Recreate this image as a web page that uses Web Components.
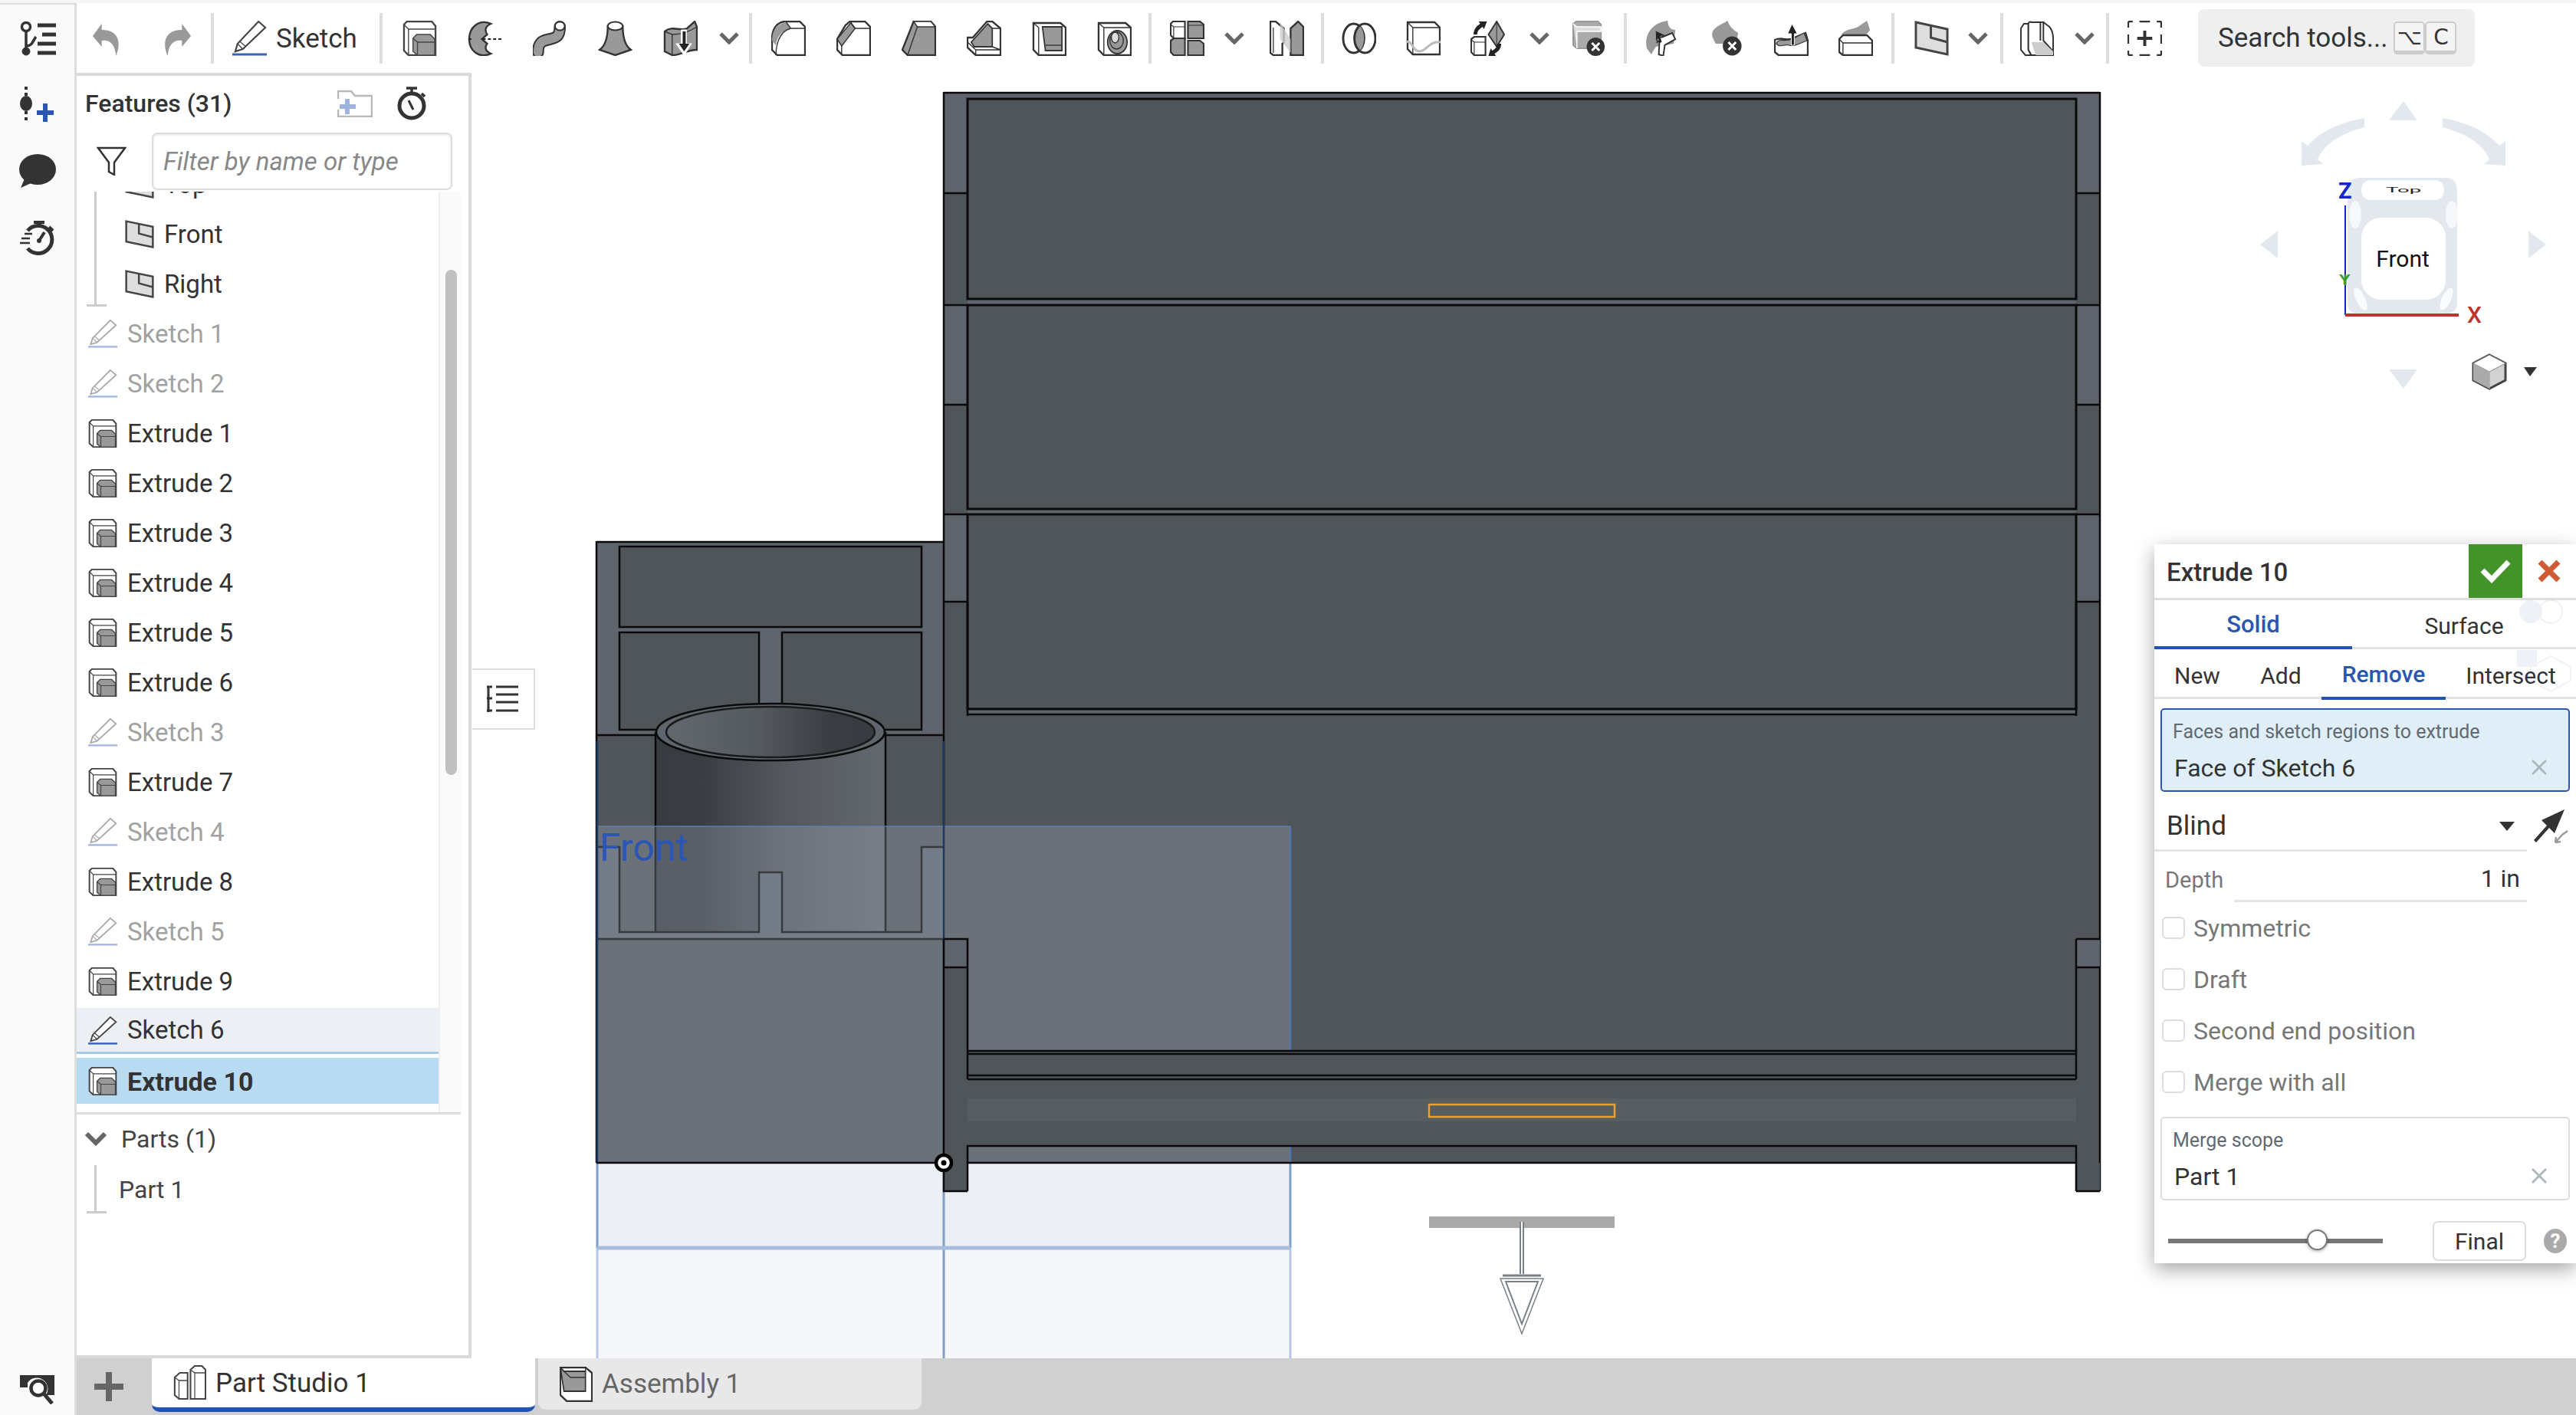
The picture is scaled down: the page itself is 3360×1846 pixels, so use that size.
<!DOCTYPE html>
<html>
<head>
<meta charset="utf-8">
<title>Part Studio 1</title>
<style>
  html, body { margin: 0; height: 100%; overflow: hidden; background: #fff; }
  body { font-family: Roboto, "Noto Sans", sans-serif; color: #333; }
</style>
</head>
<body>
<onshape-app>
  <side-rail slot="rail"></side-rail>
  <top-toolbar slot="toolbar">
    <tool-button icon="undo" w="82"></tool-button>
    <tool-button icon="redo" w="93"></tool-button>
    <tool-sep style="margin:0"></tool-sep>
    <sketch-button></sketch-button>
    <tool-sep style="margin:0 6px 0 0"></tool-sep>
    <tool-button icon="extrude"></tool-button>
    <tool-button icon="revolve"></tool-button>
    <tool-button icon="sweep"></tool-button>
    <tool-button icon="loft"></tool-button>
    <tool-button icon="thicken"></tool-button>
    <tool-chevron w="42"></tool-chevron>
    <tool-sep></tool-sep>
    <tool-button icon="fillet"></tool-button>
    <tool-button icon="chamfer"></tool-button>
    <tool-button icon="draft"></tool-button>
    <tool-button icon="rib"></tool-button>
    <tool-button icon="shell"></tool-button>
    <tool-button icon="hole"></tool-button>
    <tool-sep style="margin:0 4px 0 2px"></tool-sep>
    <tool-button icon="pattern"></tool-button>
    <tool-chevron w="38"></tool-chevron>
    <tool-button icon="mirror" style="margin-left:7px"></tool-button>
    <tool-sep style="margin:0 3px 0 2px"></tool-sep>
    <tool-button icon="boolean" w="84"></tool-button>
    <tool-button icon="split" w="84"></tool-button>
    <tool-button icon="transform" w="84"></tool-button>
    <tool-chevron w="43" style="margin-left:4px"></tool-chevron>
    <tool-button icon="deletepart" style="margin-left:2px"></tool-button>
    <tool-sep style="margin:0 4px 0 2px"></tool-sep>
    <tool-button icon="modify" w="84"></tool-button>
    <tool-button icon="deleteface" w="84"></tool-button>
    <tool-button icon="moveface" w="84"></tool-button>
    <tool-button icon="replaceface" w="84"></tool-button>
    <tool-sep style="margin:0 6px 0 5px"></tool-sep>
    <tool-button icon="plane" w="84"></tool-button>
    <tool-chevron w="37"></tool-chevron>
    <tool-sep style="margin:0 1px 0 11px"></tool-sep>
    <tool-button icon="connector" w="84"></tool-button>
    <tool-chevron w="36" style="margin-left:3px"></tool-chevron>
    <tool-sep style="margin:0 4px 0 10px"></tool-sep>
    <tool-button icon="plusbox" w="84"></tool-button>
    <tool-search style="margin-left:28px"></tool-search>
  </top-toolbar>
  <feature-panel slot="panel">
    <tree-group slot="features">
      <feature-row icon="plane" inset="37">Top</feature-row>
      <feature-row icon="plane" inset="37">Front</feature-row>
      <feature-row icon="plane" inset="37">Right</feature-row>
    </tree-group>
    <feature-row slot="features" icon="sketch" dim>Sketch 1</feature-row>
    <feature-row slot="features" icon="sketch" dim>Sketch 2</feature-row>
    <feature-row slot="features" icon="extrude">Extrude 1</feature-row>
    <feature-row slot="features" icon="extrude">Extrude 2</feature-row>
    <feature-row slot="features" icon="extrude">Extrude 3</feature-row>
    <feature-row slot="features" icon="extrude">Extrude 4</feature-row>
    <feature-row slot="features" icon="extrude">Extrude 5</feature-row>
    <feature-row slot="features" icon="extrude">Extrude 6</feature-row>
    <feature-row slot="features" icon="sketch" dim>Sketch 3</feature-row>
    <feature-row slot="features" icon="extrude">Extrude 7</feature-row>
    <feature-row slot="features" icon="sketch" dim>Sketch 4</feature-row>
    <feature-row slot="features" icon="extrude">Extrude 8</feature-row>
    <feature-row slot="features" icon="sketch" dim>Sketch 5</feature-row>
    <feature-row slot="features" icon="extrude">Extrude 9</feature-row>
    <feature-row slot="features" icon="sketch" hover>Sketch 6</feature-row>
    <feature-row slot="features" icon="extrude" selected>Extrude 10</feature-row>
  </feature-panel>
  <model-view slot="view">
    <view-cube></view-cube>
    <tree-toggle></tree-toggle>
    <extrude-dialog></extrude-dialog>
  </model-view>
  <tab-bar slot="tabs">
    <doc-tab icon="studio" active>Part Studio 1</doc-tab>
    <doc-tab icon="assembly">Assembly 1</doc-tab>
  </tab-bar>
</onshape-app>

<script>
// toolbar + feature tree icons, all drawn on a 46x46 box
const ICONS = {
  undo: `<path d="M14 4 L2 20 L14 34 V26 C24 24 32 30 33 46 C40 30 38 12 14 12Z" fill="#999"/>`,
  redo: `<path d="M32 4 L44 20 L32 34 V26 C22 24 14 30 13 46 C6 30 8 12 32 12Z" fill="#999"/>`,
  extrude: `<path d="M2 5 L6 1 H39 L44 7 V45 H8 L2 39Z" fill="#fff" stroke="#444" stroke-width="2.4"/>
    <path d="M2 5 L8 11 H44 M8 11 V45" fill="none" stroke="#444" stroke-width="1.4"/>
    <path d="M14 23 L19 18 H37 L43 24 V45 H20 L14 40Z" fill="#999" stroke="#444" stroke-width="1.6"/>
    <path d="M14 23 L20 28 H43 M20 28V45" fill="none" stroke="#444" stroke-width="1.4"/>`,
  revolve: `<path d="M31 4 C15 -3 2 9 2 24 C2 39 15 50 31 43 C24 40 22 35 26 30 L19 24 L26 18 C22 12 24 7 31 4Z" fill="#999" stroke="#333" stroke-width="2.4"/>
    <path d="M1 24 H8 M20 24 H45" stroke="#222" stroke-width="2" stroke-dasharray="4 3"/>`,
  sweep: `<path d="M7 41 C7 26 15 26 23 24 C32 22 36 20 36 8" fill="none" stroke="#333" stroke-width="16" stroke-linecap="round"/>
    <path d="M7 41 C7 26 15 26 23 24 C32 22 36 20 36 8" fill="none" stroke="#999" stroke-width="12" stroke-linecap="round"/>
    <ellipse cx="36" cy="7" rx="6.5" ry="5.5" fill="#fff" stroke="#333" stroke-width="2"/>`,
  loft: `<path d="M13 7 C13 25 8 34 2 38 L23 45 L44 38 C38 34 33 25 33 7Z" fill="#999" stroke="#333" stroke-width="2.4"/>
    <ellipse cx="23" cy="7" rx="10" ry="5.5" fill="#fff" stroke="#333" stroke-width="2"/>`,
  thicken: `<path d="M2 14 C12 6 22 14 32 10 L42 1 L45 8 V38 C32 38 20 46 12 45 L2 40Z" fill="#999" stroke="#333" stroke-width="2.4"/>
    <path d="M12 45 V18 M2 14 L12 18 C22 18 32 16 45 8" fill="none" stroke="#333" stroke-width="1.4"/>
    <path d="M24 12 V30 H17 L28 45 L38 30 H31 V12Z" fill="#fff" stroke="#fff" stroke-width="1"/>
    <path d="M26 14 V30 H21 L28 40 L35 30 H30 V14Z" fill="#222"/>`,
  fillet: `<path d="M1 24 C1 10 8 2 18 1 H38 L45 8 V45 H8 L1 38Z" fill="#fff" stroke="#333" stroke-width="2.4"/>
    <path d="M1 26 C1 12 8 4 20 2 L26 10 C14 13 8 20 6 32Z" fill="#999"/>
    <path d="M26 10 H45 M26 10 L20 2 M26 10 C14 13 7 24 6 45" fill="none" stroke="#333" stroke-width="1.4"/>`,
  chamfer: `<path d="M1 24 L12 6 L18 1 H38 L45 8 V45 H8 L1 38Z" fill="#fff" stroke="#333" stroke-width="2.4"/>
    <path d="M1 24 L19 3 L25 10 L7 33Z" fill="#999" stroke="#333" stroke-width="1.4"/>
    <path d="M25 10 H45 M25 10 L19 2 M7 33 V45" fill="none" stroke="#333" stroke-width="1.4"/>`,
  draft: `<path d="M16 1 H39 L45 8 V45 H8 L1 38Z" fill="#999" stroke="#333" stroke-width="2.4"/>
    <path d="M16 1 H39 L45 8 H21Z" fill="#fff" stroke="#333" stroke-width="1.4"/>
    <path d="M21 8 L8 45" stroke="#333" stroke-width="1.4"/>`,
  rib: `<path d="M27 1 H34 L45 10 V45 H12 L1 35 V22 L8 22 Z" fill="#fff" stroke="#333" stroke-width="2.4"/>
    <path d="M28 4 L34 10 V34 H10 L6 28Z" fill="#999" stroke="#333" stroke-width="1.8"/>
    <path d="M34 10 H45 M34 34 L45 38 M1 28 L12 38 V45 M12 38 H45" fill="none" stroke="#333" stroke-width="1.4"/>`,
  shell: `<path d="M2 3 H38 L45 9 V45 H9 L2 38Z" fill="#fff" stroke="#333" stroke-width="2.4"/>
    <path d="M2 3 L9 9 V45" fill="none" stroke="#333" stroke-width="1.4"/>
    <path d="M14 8 H40 V39 H18Z" fill="#999" stroke="#333" stroke-width="1.8"/>
    <path d="M18 32 H40" stroke="#333" stroke-width="1.4"/>`,
  hole: `<path d="M2 3 H38 L45 9 V45 H9 L2 38Z" fill="#fff" stroke="#333" stroke-width="2.4"/>
    <path d="M2 3 L9 9 V45 M9 9 H45" fill="none" stroke="#333" stroke-width="1.4"/>
    <ellipse cx="27" cy="28" rx="13" ry="15" fill="#999" stroke="#333" stroke-width="1.8"/>
    <ellipse cx="26" cy="26" rx="9" ry="11" fill="#999" stroke="#333" stroke-width="1.4"/>
    <ellipse cx="24" cy="22" rx="5" ry="7" fill="#ddd" stroke="#333" stroke-width="1.4"/>`,
  pattern: `<path d="M1 4 L4 1 H20 V23 H5 L1 19Z" fill="#fff" stroke="#333" stroke-width="2.2"/>
    <path d="M24 1 H40 L45 5 V23 H24Z" fill="#999" stroke="#333" stroke-width="2.2"/>
    <path d="M1 26 L5 23 H20 V45 H5 L1 41Z" fill="#999" stroke="#333" stroke-width="2.2"/>
    <path d="M24 26 H40 L45 30 V45 H24Z" fill="#999" stroke="#333" stroke-width="2.2"/>
    <path d="M1 5 L5 8 H20 M5 8 V23 M24 6 H45" fill="none" stroke="#333" stroke-width="1.2"/>`,
  mirror: `<path d="M1 1 H8 L19 10 V28 L17 30 V45 H5 L1 42Z" fill="#fff" stroke="#333" stroke-width="2.4"/>
    <path d="M28 30 V10 L38 1 L45 8 V45 H28Z" fill="#999" stroke="#333" stroke-width="2.4"/>
    <path d="M14 2 L28 24 V42 L14 24Z" fill="#ccc" opacity=".8"/>
    <path d="M5 9 V42" stroke="#333" stroke-width="1.3"/>`,
  boolean: `<ellipse cx="16" cy="23" rx="14" ry="19" fill="#fff" stroke="#333" stroke-width="3"/>
    <path d="M23 6 C32 12 32 34 23 40 C14 34 14 12 23 6Z" fill="#999"/>
    <ellipse cx="31" cy="23" rx="14" ry="19" fill="none" stroke="#333" stroke-width="3"/>`,
  split: `<path d="M2 2 H38 L45 9 V44 H9 L2 37Z" fill="#fff" stroke="#333" stroke-width="2.4"/>
    <path d="M2 2 L9 9 V44 M9 9 H45" fill="none" stroke="#333" stroke-width="1.4"/>
    <path d="M0 28 C8 24 8 40 18 40 C28 40 30 26 46 28" fill="none" stroke="#bbb" stroke-width="3"/>`,
  transform: `<path d="M1 24 L5 21 H20 V45 H5 L1 41Z" fill="#fff" stroke="#333" stroke-width="2.2"/>
    <path d="M1 25 L5 28 H20 M5 28 V45" fill="none" stroke="#333" stroke-width="1.2"/>
    <path d="M35 1 L45 18 L35 34 L24 18Z" fill="#999" stroke="#333" stroke-width="2"/>
    <path d="M35 1 V34" stroke="#333" stroke-width="1"/>
    <path d="M4 18 C5 10 8 7 13 4 L11 1 H22 L18 11 L16 8 C12 11 9 13 9 18Z" fill="#222"/>
    <path d="M41 30 C41 37 36 41 32 43 L34 46 H24 L27 36 L29 39 C33 37 36 34 36 30Z" fill="#222"/>`,
  deletepart: `<path d="M1 4 L5 1 H34 L38 5 V36 H6 L1 32Z" fill="#aaa" stroke="#999" stroke-width="2"/>
    <path d="M1 4 L6 8 H38 V14 H6 V36" fill="#ddd" stroke="#fff" stroke-width="1.5"/>
    <circle cx="31" cy="34" r="12" fill="#333"/>
    <path d="M26 29 L36 39 M36 29 L26 39" stroke="#fff" stroke-width="3"/>`,
  modify: `<path d="M2 36 C-2 18 10 2 30 0 C30 8 34 12 40 12 L38 30 L14 34 L8 44Z" fill="#999"/>
    <path d="M15 15 L24 19 L21 22 L36 16 L40 24 L26 32 L24 46 L18 44 L19 26 L16 28Z" fill="#fff" stroke="#333" stroke-width="2"/>
    <path d="M15 15 L23 18 L20 21 L22 28 L19 29 L17 23 L14 25Z" fill="#222"/>`,
  deleteface: `<path d="M4 22 C0 10 14 6 24 0 C26 8 32 12 38 16 L36 26 L20 30 L8 30Z" fill="#999"/>
    <circle cx="30" cy="33" r="12.5" fill="#333"/>
    <path d="M25 28 L35 38 M35 28 L25 38" stroke="#fff" stroke-width="3"/>`,
  moveface: `<path d="M1 25 C10 21 14 26 22 24 L42 16 L45 26 V45 H6 L1 41Z" fill="#fff" stroke="#333" stroke-width="2.4"/>
    <path d="M3 30 C5 22 14 28 24 24 L40 16 L44 26 C32 30 28 34 20 32 C12 30 8 36 3 30Z" fill="#999" stroke="#333" stroke-width="1.2"/>
    <path d="M24 4 L31 17 H27 V32 H23 V17 H18Z" fill="#222" stroke="#fff" stroke-width="1"/>`,
  replaceface: `<path d="M4 18 C10 10 18 12 26 8 L38 0 L42 12 C38 20 22 26 12 22Z" fill="#999"/>
    <path d="M1 24 L6 19 H38 L45 26 V45 H6 L1 41Z" fill="#fff" stroke="#333" stroke-width="2.4"/>
    <path d="M1 24 L6 29 H45 M6 29 V45" fill="none" stroke="#333" stroke-width="1.4"/>`,
  plane: `<path d="M2 2 L44 11 V44 L2 35Z" fill="#ddd" stroke="#444" stroke-width="3"/>
    <path d="M22 5 V22 L44 28" fill="none" stroke="#444" stroke-width="3"/>`,
  connector: `<path d="M2 10 L6 4 L12 4 V38 L16 45 L8 45 L2 38Z" fill="#fff" stroke="#333" stroke-width="2"/>
    <path d="M12 4 C12 2 14 1 16 2 H32 V26 L45 40 V45 H16 L12 38Z" fill="#fff" stroke="#333" stroke-width="2"/>
    <path d="M28 2 V26 M32 2 L40 8 C44 12 45 18 45 24 V40" fill="none" stroke="#333" stroke-width="2"/>
    <path d="M16 28 H32 L45 40 V45 H22Z" fill="#ccc"/>`,
  plusbox: `<path d="M1 9 V3 Q1 1 3 1 H7 M16 1 H30 M39 1 H43 Q45 1 45 3 V9 M45 18 V30 M45 39 V43 Q45 45 43 45 H39 M30 45 H16 M7 45 H3 Q1 45 1 43 V39 M1 30 V18" fill="none" stroke="#333" stroke-width="2.4"/>
    <path d="M23 13 V33 M13 23 H33" stroke="#333" stroke-width="4"/>`,
  sketch: `<path d="M35 1 L44 9 L14 37 L4 40 L7 30Z" fill="#fff" stroke="#444" stroke-width="2.2"/>
    <path d="M7 30 L14 37 M10 27 L17 33" fill="none" stroke="#444" stroke-width="1.4"/>
    <rect x="0" y="42.5" width="46" height="3" fill="#3a62b8"/>`,
  studio: `<path d="M2 16 L9 10 H20 V44 H8 L2 39Z" fill="#fff" stroke="#444" stroke-width="2.2"/>
    <path d="M24 6 L30 1 H40 L45 6 V44 H24Z" fill="#fff" stroke="#444" stroke-width="2.2"/>
    <path d="M2 16 L8 20 H20 M8 20 V44 M24 6 L30 10 H45 M30 10 V44" fill="none" stroke="#444" stroke-width="1.3"/>`,
  assembly: `<path d="M1 1 H36 L45 8 V45 H10 L1 37Z" fill="#fff" stroke="#333" stroke-width="2.4"/>
    <path d="M1 1 L6 6 H36 V32 H6Z" fill="#999" stroke="#333" stroke-width="1.8"/>
    <path d="M36 1 V6 M6 6 L15 14 H36" fill="none" stroke="#333" stroke-width="1.4"/>`
};

function icon(name, w = 45, h = 46) {
  return `<svg viewBox="0 0 46 46" width="${w}" height="${h}" preserveAspectRatio="none" style="display:block;flex:none">${ICONS[name] || ""}</svg>`;
}

class OnshapeApp extends HTMLElement {
  constructor() {
    super();
    this.attachShadow({ mode: "open" });
    this.shadowRoot.innerHTML = `
      <style>
        :host {
          display: grid;
          width: 100vw;
          height: 100vh;
          grid-template-columns: 100px 515px 1fr;
          grid-template-rows: 4px 91px 1fr 74px;
          grid-template-areas:
            "strip strip strip"
            "rail tools tools"
            "rail panel view"
            "rail tabs tabs";
          font-family: Roboto, "Noto Sans", sans-serif;
          color: #333;
        }
        .strip { grid-area: strip; background: #f6f6f6; }
        ::slotted([slot=rail]) { grid-area: rail; }
        ::slotted([slot=toolbar]) { grid-area: tools; }
        ::slotted([slot=panel]) { grid-area: panel; }
        ::slotted([slot=view]) { grid-area: view; }
        ::slotted([slot=tabs]) { grid-area: tabs; }
      </style>
      <div class="strip"></div>
      <slot name="rail"></slot>
      <slot name="toolbar"></slot>
      <slot name="panel"></slot>
      <slot name="view"></slot>
      <slot name="tabs"></slot>`;
  }
}

class SideRail extends HTMLElement {
  constructor() {
    super();
    this.attachShadow({ mode: "open" });
    this.shadowRoot.innerHTML = `
      <style>
        :host {
          display: flex;
          flex-direction: column;
          align-items: center;
          box-sizing: border-box;
          background: #fafafa;
          border-top: 2px solid #ddd;
          border-right: 3px solid #ddd;
          padding: 22px 0 14px;
        }
        svg { display: block; }
        .foot { margin-top: auto; }
      </style>
      <!-- feature list toggle -->
      <svg width="48" height="46" viewBox="0 0 48 46" fill="none" stroke="#333">
        <circle cx="9" cy="7" r="5.5" stroke-width="3.5"/>
        <path d="M9 13 V38 M9 32 C18 32 18 24 22 20" stroke-width="3.5"/>
        <circle cx="9" cy="39" r="5" fill="#333"/>
        <path d="M24 5 H48 M30 17 H48 M24 29 H48 M24 41 H48" stroke-width="5"/>
      </svg>
      <!-- insert feature -->
      <svg width="46" height="46" viewBox="0 0 46 46" style="margin-top:39px">
        <path d="M8 0 V14 M8 32 V46" stroke="#333" stroke-width="4" stroke-dasharray="4 4"/>
        <ellipse cx="8" cy="22" rx="8" ry="10" fill="#333"/>
        <path d="M33 22 V46 M22 34 H44" stroke="#2a56b0" stroke-width="6"/>
      </svg>
      <!-- comments -->
      <svg width="48" height="44" viewBox="0 0 48 44" style="margin-top:42px">
        <ellipse cx="24" cy="20" rx="24" ry="20" fill="#333"/>
        <path d="M8 30 L2 44 L20 36Z" fill="#333"/>
      </svg>
      <!-- performance -->
      <svg width="46" height="46" viewBox="0 0 46 46" style="margin-top:43px">
        <path d="M18 2 H32 M25 2 V8 M38 8 L43 13" stroke="#333" stroke-width="4" fill="none"/>
        <path d="M10 13 A18 18 0 1 1 10 36" fill="none" stroke="#333" stroke-width="5"/>
        <path d="M25 26 L32 15" stroke="#333" stroke-width="4"/>
        <circle cx="25" cy="26" r="3" fill="#333"/>
        <path d="M6 17 H16 M2 23 H13 M0 29 H13" stroke="#333" stroke-width="2.5"/>
      </svg>
      <!-- find -->
      <svg class="foot" width="45" height="38" viewBox="0 0 45 38">
        <path d="M0 0 H45 V26 H34 A14 14 0 0 0 10 10 V16 H0Z" fill="#333"/>
        <circle cx="24" cy="17" r="9.5" fill="#fff" stroke="#333" stroke-width="4.5"/>
        <path d="M31 24 L42 37" stroke="#333" stroke-width="5"/>
      </svg>`;
  }
}

class TopToolbar extends HTMLElement {
  constructor() {
    super();
    this.attachShadow({ mode: "open" });
    this.shadowRoot.innerHTML = `
      <style>
        :host { display: flex; align-items: center; background: #fff; min-width: 0; }
      </style>
      <slot></slot>`;
  }
}

class ToolButton extends HTMLElement {
  constructor() {
    super();
    this.attachShadow({ mode: "open" });
  }
  connectedCallback() {
    const w = this.getAttribute("w") || 85;
    this.shadowRoot.innerHTML = `
      <style>
        :host { display: flex; flex: none; justify-content: center; align-items: center; width: ${w}px; height: 46px; }
      </style>
      ${icon(this.getAttribute("icon"))}`;
  }
}

class ToolSep extends HTMLElement {
  constructor() {
    super();
    this.attachShadow({ mode: "open" });
    this.shadowRoot.innerHTML = `<style>:host { display: block; flex: none; width: 4px; height: 66px; background: #ddd; margin: 0 5px; }</style>`;
  }
}

class ToolChevron extends HTMLElement {
  constructor() {
    super();
    this.attachShadow({ mode: "open" });
  }
  connectedCallback() {
    const w = this.getAttribute("w") || 38;
    this.shadowRoot.innerHTML = `
      <style>:host { display: flex; flex: none; justify-content: center; width: ${w}px; }</style>
      <svg width="26" height="16" viewBox="0 0 26 16"><path d="M2 2 L13 13 L24 2" fill="none" stroke="#666" stroke-width="5"/></svg>`;
  }
}

class SketchButton extends HTMLElement {
  constructor() {
    super();
    this.attachShadow({ mode: "open" });
    this.shadowRoot.innerHTML = `
      <style>
        :host { display: flex; flex: none; align-items: center; box-sizing: border-box; width: 216px; padding-left: 24px; gap: 12px; font-size: 35px; }
        span { padding-top: 1px; }
      </style>
      ${icon("sketch", 45, 46)}<span>Sketch</span>`;
  }
}

class ToolSearch extends HTMLElement {
  constructor() {
    super();
    this.attachShadow({ mode: "open" });
    this.shadowRoot.innerHTML = `
      <style>
        :host {
          display: flex; flex: none; align-items: center; box-sizing: border-box;
          width: 361px; height: 75px; padding: 0 26px; background: #efefef; border-radius: 8px;
          font-size: 35px;
        }
        kbd {
          display: flex; align-items: center; justify-content: center; box-sizing: border-box; flex: none;
          width: 41px; height: 43px; background: #f4f4f4; border: 2px solid #ccc; border-bottom-width: 5px;
          border-radius: 5px; font: 28px "DejaVu Sans", sans-serif; color: #333;
        }
        span { margin-right: 8px; white-space: nowrap; }
      </style>
      <span>Search tools...</span><kbd>⌥</kbd><kbd>C</kbd>`;
  }
}

class FeaturePanel extends HTMLElement {
  constructor() {
    super();
    this.attachShadow({ mode: "open" });
    this.shadowRoot.innerHTML = `
      <style>
        :host {
          display: flex; flex-direction: column; box-sizing: border-box; min-height: 0;
          background: #fff; border: 4px solid #d9d9d9; border-left: 0; border-bottom-width: 4px; overflow: hidden;
        }
        header { display: flex; align-items: center; height: 71px; flex: none; padding-left: 11px; }
        h2 { margin: 0; font-size: 32px; font-weight: 500; width: 329px; white-space: nowrap; }
        .filter { display: flex; align-items: center; flex: none; height: 80px; padding-left: 26px; gap: 33px; }
        .input {
          box-sizing: border-box; width: 392px; height: 75px; border: 2px solid #ddd; border-radius: 7px;
          display: flex; align-items: center; padding: 2px 0 0 13px; font-style: italic; font-size: 33px; line-height: 26px; color: #888;
          box-shadow: inset 0 1px 3px rgba(0,0,0,.12); position: relative; background: #fff;
        }
        .tree { display: flex; flex: none; height: 1201px; width: 501px; border-bottom: 3px solid #ddd; box-sizing: content-box; }
        .list { width: 472px; flex: none; overflow: hidden; }
        .inner { margin-top: -40px; }
        .track { flex: 1; background: #fafafa; border-left: 2px solid #eee; padding: 102px 0 0 7px; }
        .thumb { width: 15px; height: 659px; background: #c0c0c0; border-radius: 8px; }
        .parts { display: flex; align-items: center; height: 64px; flex: none; padding-left: 10px; font-size: 32px; color: #444; }
        .parts span { margin-left: 18px; }
        .part { margin: 2px 0 0 23px; width: 200px; height: 63px; border-left: 3px solid #ccc; position: relative; display: flex; align-items: center; padding-left: 29px; font-size: 32px; color: #444; }
        .part::after { content: ""; position: absolute; left: -13px; bottom: 0; width: 26px; height: 3px; background: #ccc; }
      </style>
      <header>
        <h2>Features (31)</h2>
        <svg width="46" height="36" viewBox="0 0 46 36" fill="none">
          <path d="M1 12 V2 H18 L23 8 H45 V35 H1 V26" stroke="#b8b8b8" stroke-width="2.5"/>
          <path d="M13 12 V32 M3 22 H24" stroke="#9fb4dc" stroke-width="6"/>
        </svg>
        <svg width="38" height="44" viewBox="0 0 38 44" style="margin-left:32px">
          <path d="M12 2 H26 M19 2 V8 M32 9 L36 13" stroke="#333" stroke-width="3.5" fill="none"/>
          <circle cx="19" cy="25" r="16" fill="none" stroke="#333" stroke-width="5"/>
          <path d="M15 18 L21 30" stroke="#333" stroke-width="3"/>
        </svg>
      </header>
      <div class="filter">
        <svg width="39" height="38" viewBox="0 0 39 38" fill="none" stroke="#333" stroke-width="2.5"><path d="M2 2 H37 L23 21 V37 L16 33 V21Z"/></svg>
        <div class="input">Filter by name or type</div>
      </div>
      <div class="tree">
        <div class="list"><div class="inner"><slot name="features"></slot></div></div>
        <div class="track"><div class="thumb"></div></div>
      </div>
      <div class="parts">
        <svg width="30" height="20" viewBox="0 0 30 20"><path d="M3 3 L15 15 L27 3" fill="none" stroke="#666" stroke-width="6"/></svg>
        <span>Parts (1)</span>
      </div>
      <div class="part">Part 1</div>`;
  }
}

class TreeGroup extends HTMLElement {
  constructor() {
    super();
    this.attachShadow({ mode: "open" });
    this.shadowRoot.innerHTML = `
      <style>
        :host { display: block; position: relative; margin: 0 0 5px 23px; border-left: 3px solid #ccc; height: 190px; }
        :host::after { content: ""; position: absolute; left: -13px; bottom: 0; width: 26px; height: 3px; background: #ccc; }
      </style>
      <slot></slot>`;
  }
}

class FeatureRow extends HTMLElement {
  constructor() {
    super();
    this.attachShadow({ mode: "open" });
  }
  connectedCallback() {
    const inset = this.getAttribute("inset") || 15;
    this.shadowRoot.innerHTML = `
      <style>
        :host {
          display: flex; align-items: center; box-sizing: border-box; height: 60px; margin-bottom: 5px;
          padding: 1px 0 0 ${inset}px; gap: 13px; font-size: 33px; line-height: 26px; color: #333;
        }
        :host([dim]) { color: #a2a2a2; }
        :host([dim]) svg { opacity: .45; }
        :host([hover]) { background: #ecf0f4; border-bottom: 3px solid #a3cbea; }
        :host([selected]) { background: #b9dbf2; font-weight: 700; font-size: 34px; }
      </style>
      ${icon(this.getAttribute("icon"), 38, 37)}<slot></slot>`;
  }
}

class ModelView extends HTMLElement {
  constructor() {
    super();
    this.attachShadow({ mode: "open" });
    const K = "#0a0a0a", L = "#5e656c", D = "#50555a";
    this.shadowRoot.innerHTML = `
      <style>
        :host { display: block; position: relative; background: #fff; min-width: 0; overflow: hidden; }
        svg.model { position: absolute; left: 0; top: 0; }
      </style>
      <!-- free canvas, drawn in page coordinates -->
      <svg class="model" width="2745" height="1677" viewBox="615 95 2745 1677">
        <defs>
          <linearGradient id="body" x1="0" x2="1" y1="0" y2="0">
            <stop offset="0" stop-color="#383b40"/><stop offset=".2" stop-color="#3a3d42"/>
            <stop offset=".55" stop-color="#54585d"/><stop offset="1" stop-color="#62686f"/>
          </linearGradient>
          <linearGradient id="bore" x1="0" x2="1" y1="0" y2="0">
            <stop offset="0" stop-color="#62686f"/><stop offset=".45" stop-color="#54595e"/>
            <stop offset=".8" stop-color="#393c41"/><stop offset="1" stop-color="#383b40"/>
          </linearGradient>
        </defs>

        <!-- small block on the left -->
        <rect x="778" y="706" width="453" height="253" fill="${L}"/>
        <rect x="778" y="959" width="453" height="258" fill="${D}"/>
        <rect x="778" y="1225" width="453" height="292" fill="${D}"/>
        <g fill="${D}" stroke="${K}" stroke-width="2.5">
          <rect x="808" y="713" width="394" height="105"/>
          <rect x="808" y="825" width="182" height="127"/>
          <rect x="1020" y="825" width="182" height="127"/>
        </g>
        <rect x="855" y="955" width="300" height="262" fill="url(#body)"/>
        <path d="M778 1105 H808 V1216 H990 V1138 H1020 V1216 H1202 V1105 H1231 V1225 H778Z" fill="${L}"/>
        <path d="M778 707 H1231 M778 706 V1517 M778 959 H855 M1155 959 H1231 M778 1105 H808 V1216 H990 V1138 H1020 V1216 H1202 V1105 H1231 M778 1225 H1262 M855 955 V1216 M1155 955 V1216" fill="none" stroke="${K}" stroke-width="2.5"/>
        <ellipse cx="1005" cy="955" rx="149" ry="37" fill="${L}" stroke="${K}" stroke-width="2.5"/>
        <ellipse cx="1005" cy="955" rx="136" ry="33" fill="url(#bore)" stroke="#1a1a1a" stroke-width="2.5"/>

        <!-- main body -->
        <rect x="1231" y="120" width="1508" height="1397" fill="${D}"/>
        <rect x="1231" y="120" width="1508" height="9" fill="${L}"/>
        <g fill="${L}">
          <rect x="1231" y="120" width="31" height="132"/><rect x="2708" y="120" width="31" height="132"/>
          <rect x="1231" y="398" width="31" height="130"/><rect x="2708" y="398" width="31" height="130"/>
          <rect x="1231" y="671" width="31" height="114"/><rect x="2708" y="671" width="31" height="114"/>
          <rect x="1262" y="390" width="1446" height="8"/>
          <rect x="1262" y="664" width="1446" height="7"/>
          <rect x="1262" y="925" width="1446" height="7"/>
        </g>
        <g fill="${D}" stroke="${K}" stroke-width="3">
          <rect x="1262" y="129" width="1446" height="261"/>
          <rect x="1262" y="398" width="1446" height="266"/>
          <rect x="1262" y="671" width="1446" height="254"/>
        </g>
        <path d="M1262 932 H2708 M1231 252 H1262 M2708 252 H2739 M1231 398 H1262 M2708 398 H2739 M1231 528 H1262 M2708 528 H2739 M1231 671 H1262 M2708 671 H2739 M1231 785 H1262 M2708 785 H2739 M1231 121 H2739 M2739 120 V1554 M1231 120 V1078 M1262 785 V934 M2708 785 V934" fill="none" stroke="${K}" stroke-width="2.5"/>

        <!-- sketch plane, lies over everything behind it -->
        <rect x="779" y="1078" width="904" height="550" fill="rgb(181,193,212)" fill-opacity=".257"/>
        <rect x="779" y="1628" width="904" height="144" fill="rgb(181,193,212)" fill-opacity=".12"/>
        <path d="M779 1078 H1683" stroke="#5e80a8" stroke-width="2" opacity=".7"/>
        <path d="M779 967 V1517 M1231 967 V1517" stroke="#1b3a66" stroke-width="2.5"/>
        <path d="M1683 1078 V1517" stroke="#4d78ad" stroke-width="2.5"/>
        <path d="M779 1517 V1628 M1231 1517 V1772 M1683 1517 V1628" stroke="#7f9fcb" stroke-width="3"/>
        <path d="M779 1628 V1772 M1683 1628 V1772" stroke="#b4c8e4" stroke-width="3"/>
        <path d="M779 1628 H1683" stroke="#a8bddd" stroke-width="5"/>
        <text x="782" y="1123" font-family="Roboto, sans-serif" font-size="50" fill="#2a56b8">Front</text>

        <!-- front parts: rail and legs -->
        <rect x="1231" y="1225" width="31" height="329" fill="${D}"/>
        <rect x="1231" y="1225" width="31" height="37" fill="${L}"/>
        <rect x="2708" y="1225" width="31" height="37" fill="${L}"/>
        <rect x="2708" y="1517" width="31" height="37" fill="${D}"/>
        <rect x="1262" y="1371" width="1446" height="124" fill="${D}"/>
        <rect x="1262" y="1433" width="1446" height="30" fill="#575e61"/>
        <path d="M1231 1225 H1262 V1408 M1231 1262 H1262 M2708 1225 H2739 M2708 1262 H2739 M2708 1225 V1408 M1262 1371 H2708 M1262 1375 H2708 M1262 1403 H2708 M1262 1408 H2708 M1262 1554 V1495 H2708 V1554 M1231 1225 V1554 H1262 M2708 1554 H2739 M1262 1517 H2708" fill="none" stroke="${K}" stroke-width="2.5"/>
        <path d="M778 1517 H1231" stroke="${K}" stroke-width="2.5"/>
        <rect x="1864" y="1441" width="242" height="16" fill="none" stroke="#e8a030" stroke-width="2.5"/>
        <circle cx="1231" cy="1517" r="10" fill="#fff" stroke="#000" stroke-width="4.5"/>
        <circle cx="1231" cy="1517" r="3.5" fill="#000"/>

        <!-- extrude depth manipulator -->
        <rect x="1864" y="1587" width="242" height="15" fill="#a9a9a9"/>
        <path d="M1985 1594 V1662" stroke="#7a8088" stroke-width="6"/>
        <path d="M1985 1594 V1662" stroke="#fff" stroke-width="2"/>
        <path d="M1960 1664 H2010" stroke="#7a8088" stroke-width="3"/>
        <path d="M1957 1668 H2013 L1985 1740Z" fill="#fff" stroke="#7a8088" stroke-width="1.5"/>
        <path d="M1964 1672 H2006 L1985 1727Z" fill="#fff" stroke="#7a8088" stroke-width="2"/>
      </svg>
      <slot></slot>`;
  }
}

class ViewCube extends HTMLElement {
  constructor() {
    super();
    this.attachShadow({ mode: "open" });
    this.shadowRoot.innerHTML = `
      <style>
        :host { position: absolute; left: 2325px; top: 25px; width: 400px; height: 400px; display: block; }
        svg { display: block; }
        text { font-family: Roboto, sans-serif; }
      </style>
      <svg width="400" height="400" viewBox="2940 120 400 400">
        <g fill="#e3e8ef">
          <path d="M3135 132 L3153 157 H3116Z"/>
          <path d="M3135 507 L3153 482 H3116Z"/>
          <path d="M2948 319 L2971 301 V337Z"/>
          <path d="M3321 319 L3298 301 V337Z"/>
          <path d="M3002 216 V184 L3010 190 C3026 172 3050 160 3084 154 V166 C3050 175 3030 190 3023 208 L3030 214Z"/>
          <path d="M3268 216 V184 L3260 190 C3244 172 3220 160 3186 154 V166 C3220 175 3240 190 3247 208 L3240 214Z"/>
          <path d="M3078 232 H3190 Q3205 232 3205 250 V395 Q3205 409 3190 409 H3076 Q3062 409 3062 395 V250 Q3062 232 3078 232Z"/>
        </g>
        <rect x="3080" y="235" width="108" height="26" rx="12" fill="#fff"/>
        <rect x="3080" y="284" width="110" height="107" rx="26" fill="#fff"/>
        <ellipse cx="3072" cy="280" rx="8" ry="18" fill="#fff" opacity=".7"/>
        <ellipse cx="3198" cy="280" rx="8" ry="18" fill="#fff" opacity=".7"/>
        <ellipse cx="3079" cy="390" rx="6" ry="16" fill="#fff" opacity=".8" transform="rotate(-25 3079 390)"/>
        <ellipse cx="3191" cy="390" rx="6" ry="16" fill="#fff" opacity=".8" transform="rotate(25 3191 390)"/>
        <text transform="translate(3135 251) scale(1.25 .42)" text-anchor="middle" font-size="22" fill="#222">Top</text>
        <text x="3134" y="348" text-anchor="middle" font-size="30" fill="#111">Front</text>
        <path d="M3059 268 V411" stroke="#1627b8" stroke-width="2"/>
        <path d="M3059 358 V372" stroke="#3a9a2a" stroke-width="3"/>
        <path d="M3059 411 H3207" stroke="#c0332a" stroke-width="4"/>
        <text x="3050" y="259" font-size="29" font-weight="700" fill="#1627c8">Z</text>
        <text transform="translate(3051 371) scale(1.2 .9)" font-size="20" font-weight="500" fill="#3a9a2a">Y</text>
        <text x="3218" y="421" font-size="30" font-weight="500" fill="#c0332a">X</text>
        <path d="M3247 463 L3268 474 V496 L3247 507 L3226 496 V474Z" fill="#d2d2d2" stroke="#444" stroke-width="3"/>
        <path d="M3226 474 L3247 485 L3268 474 L3247 463Z" fill="#fff" stroke="#888" stroke-width="1"/>
        <path d="M3247 485 V507" stroke="#aaa" stroke-width="1.5"/>
        <path d="M3226 474 L3247 485 V507 L3226 496Z" fill="#aaa"/>
        <path d="M3292 479 H3309 L3300 491Z" fill="#333"/>
      </svg>`;
  }
}

class TreeToggle extends HTMLElement {
  constructor() {
    super();
    this.attachShadow({ mode: "open" });
    this.shadowRoot.innerHTML = `
      <style>
        :host {
          position: absolute; left: 1px; top: 777px; width: 82px; height: 80px; box-sizing: border-box;
          display: flex; align-items: center; justify-content: center; background: #fff;
          border: 2px solid #ddd; border-left: 0;
        }
      </style>
      <svg width="42" height="42" viewBox="0 0 42 42" fill="none" stroke="#333">
        <path d="M2 4 V38 M12 5 H41 M12 15 H41 M12 25 H41 M12 36 H41" stroke-width="3"/>
        <path d="M0 5 H7 M0 20 H7 M0 36 H7" stroke-width="3"/>
      </svg>`;
  }
}

class ExtrudeDialog extends HTMLElement {
  constructor() {
    super();
    this.attachShadow({ mode: "open" });
    this.shadowRoot.innerHTML = `
      <style>
        :host {
          position: absolute; right: 0; top: 615px; width: 550px; height: 938px; display: flex; flex-direction: column;
          background: #fff; box-shadow: 0 8px 24px rgba(0,0,0,.35); color: #333; font-size: 32px;
        }
        .ghost { position: absolute; left: 471px; top: 72px; }
        .title { display: flex; align-items: center; height: 70px; border-bottom: 3px solid #ddd; flex: none; position: relative; }
        .title b { font-weight: 500; font-size: 33px; margin-left: 16px; flex: 1; position: relative; top: 1px; }
        .ok { width: 70px; height: 70px; background: #43932a; display: flex; align-items: center; justify-content: center; }
        .no { width: 70px; display: flex; align-items: center; justify-content: center; }
        .tabs { display: flex; height: 61px; flex: none; border-bottom: 3px solid #e4e4e4; position: relative; font-size: 31px; }
        .tabs div { display: flex; align-items: center; justify-content: center; box-sizing: border-box; height: 64px; padding-top: 2px; }
        .sel { color: #2a56b0; font-weight: 500; border-bottom: 4px solid #2353b0; }
        .modes div { font-size: 30px; padding-top: 3px; height: 66px; }
        .modes { height: 62px; }
        .query {
          box-sizing: border-box; margin: 12px 8px 0; height: 109px; border: 2px solid #ddd; border-radius: 5px;
          padding: 10px 14px 0; position: relative; flex: none;
        }
        .query.on { background: #dfeef7; border-color: #2a56b0; margin-top: 12px; }
        .query small { display: block; font-size: 25px; color: #5f6a72; line-height: 38px; }
        .query span { display: block; font-size: 32px; line-height: 46px; margin: 5px 0 0 2px; color: #333; }
        .query svg { position: absolute; right: 28px; bottom: 20px; }
        .blind { display: flex; align-items: center; height: 78px; flex: none; position: relative; }
        .blind .sel2 { box-sizing: border-box; width: 486px; height: 78px; border-bottom: 3px solid #e5e5e5; padding: 14px 16px 0; display: flex; align-items: center; justify-content: space-between; font-size: 35px; }
        .blind > svg { position: relative; top: 6px; }
        .depth { display: flex; align-items: center; height: 66px; flex: none; padding-left: 14px; width: 486px; box-sizing: border-box; }
        .depth label { color: #777; font-size: 29px; width: 90px; padding-top: 7px; }
        .depth div { flex: 1; height: 63px; line-height: 71px; text-align: right; border-bottom: 3px solid #e5e5e5; padding-right: 9px; }
        .check { display: flex; align-items: center; height: 67px; flex: none; padding-left: 10px; gap: 11px; color: #777; }
        .check i { box-sizing: border-box; width: 30px; height: 29px; border: 2px solid #ddd; border-radius: 6px; }
        .foot { display: flex; align-items: center; flex: 1; position: relative; padding: 24px 0 0 18px; }
        .slide { width: 280px; height: 6px; background: #777; position: relative; }
        .slide::after {
          content: ""; position: absolute; left: 181px; top: -12px; width: 27px; height: 27px; box-sizing: border-box;
          border-radius: 50%; background: #fff; border: 2px solid #777; box-shadow: 0 1px 4px rgba(0,0,0,.4);
        }
        .final {
          box-sizing: border-box; margin-left: 65px; width: 122px; height: 52px; border: 2px solid #ddd; border-radius: 7px;
          display: flex; align-items: center; justify-content: center; font-size: 30px;
        }
        .help {
          margin-left: 23px; width: 30px; height: 32px; border-radius: 50%; background: #aaa; color: #fff;
          display: flex; align-items: center; justify-content: center; font-size: 26px; font-weight: 700;
        }
      </style>
      <svg class="ghost" width="79" height="150" viewBox="0 0 79 150">
        <circle cx="20" cy="16" r="15" fill="#eef2f8"/>
        <circle cx="46" cy="16" r="15" fill="none" stroke="#f0f0f0" stroke-width="2"/>
        <rect x="2" y="66" width="26" height="22" fill="#eef2f8"/>
        <path d="M20 88 L46 74 L72 88 V106 L46 120 L20 106Z" fill="none" stroke="#f2f2f2" stroke-width="2"/>
      </svg>
      <div class="title">
        <b>Extrude 10</b>
        <div class="ok"><svg width="42" height="32" viewBox="0 0 42 32"><path d="M4 15 L16 27 L38 4" fill="none" stroke="#fff" stroke-width="7"/></svg></div>
        <div class="no"><svg width="30" height="30" viewBox="0 0 30 30"><path d="M3 3 L27 27 M27 3 L3 27" stroke="#cf5a33" stroke-width="7"/></svg></div>
      </div>
      <div class="tabs">
        <div class="sel" style="width:258px">Solid</div>
        <div style="flex:1;font-size:30px">Surface</div>
      </div>
      <div class="tabs modes">
        <div style="width:112px">New</div>
        <div style="width:106px">Add</div>
        <div class="sel" style="width:162px">Remove</div>
        <div style="flex:1">Intersect</div>
      </div>
      <div class="query on">
        <small>Faces and sketch regions to extrude</small>
        <span>Face of Sketch 6</span>
        <svg width="20" height="20" viewBox="0 0 20 20"><path d="M1 1 L19 19 M19 1 L1 19" stroke="#a9b5bb" stroke-width="2.5"/></svg>
      </div>
      <div class="blind">
        <div class="sel2">Blind
          <svg width="20" height="12" viewBox="0 0 20 12"><path d="M0 0 H20 L10 12Z" fill="#333"/></svg>
        </div>
        <svg width="46" height="46" viewBox="0 0 46 46" style="margin-left:8px">
          <path d="M41 1 L28 32 L21 25 L4 44 L1 41 L18 22 L11 15Z" fill="#333"/>
          <path d="M29 44 L38 34 M29 44 L30 37 M29 44 L36 43 M38 34 L45 29" stroke="#999" stroke-width="2.5" fill="none"/>
        </svg>
      </div>
      <div class="depth"><label>Depth</label><div>1 in</div></div>
      <div class="check"><i></i>Symmetric</div>
      <div class="check"><i></i>Draft</div>
      <div class="check"><i></i>Second end position</div>
      <div class="check"><i></i>Merge with all</div>
      <div class="query" style="margin-top:12px">
        <small>Merge scope</small>
        <span>Part 1</span>
        <svg width="20" height="20" viewBox="0 0 20 20"><path d="M1 1 L19 19 M19 1 L1 19" stroke="#a9b5bb" stroke-width="2.5"/></svg>
      </div>
      <div class="foot">
        <div class="slide"></div>
        <div class="final">Final</div>
        <div class="help">?</div>
      </div>`;
  }
}

class TabBar extends HTMLElement {
  constructor() {
    super();
    this.attachShadow({ mode: "open" });
    this.shadowRoot.innerHTML = `
      <style>
        :host { display: flex; background: #d0d0d0; align-items: flex-start; }
        .add { box-sizing: border-box; width: 98px; height: 74px; padding-right: 14px; display: flex; align-items: center; justify-content: center; }
      </style>
      <div class="add"><svg width="40" height="40" viewBox="0 0 40 40"><path d="M20 1 V39 M1 20 H39" stroke="#666" stroke-width="8"/></svg></div>
      <slot></slot>`;
  }
}

class DocTab extends HTMLElement {
  constructor() {
    super();
    this.attachShadow({ mode: "open" });
  }
  connectedCallback() {
    this.shadowRoot.innerHTML = `
      <style>
        :host {
          display: flex; align-items: center; box-sizing: border-box; width: 500px; height: 67px; margin-left: 4px;
          padding-left: 28px; gap: 12px; background: #e8e8e8; color: #666; font-size: 35px;
          border-radius: 0 0 10px 10px;
        }
        :host([active]) { margin-left: 0; height: 70px; background: #fff; color: #333; border-bottom: 6px solid #2353b0; }
      </style>
      ${icon(this.getAttribute("icon"), 43, 46)}<slot></slot>`;
  }
}

customElements.define("onshape-app", OnshapeApp);
customElements.define("side-rail", SideRail);
customElements.define("top-toolbar", TopToolbar);
customElements.define("tool-button", ToolButton);
customElements.define("tool-sep", ToolSep);
customElements.define("tool-chevron", ToolChevron);
customElements.define("sketch-button", SketchButton);
customElements.define("tool-search", ToolSearch);
customElements.define("feature-panel", FeaturePanel);
customElements.define("tree-group", TreeGroup);
customElements.define("feature-row", FeatureRow);
customElements.define("model-view", ModelView);
customElements.define("view-cube", ViewCube);
customElements.define("tree-toggle", TreeToggle);
customElements.define("extrude-dialog", ExtrudeDialog);
customElements.define("tab-bar", TabBar);
customElements.define("doc-tab", DocTab);
</script>
</body>
</html>
